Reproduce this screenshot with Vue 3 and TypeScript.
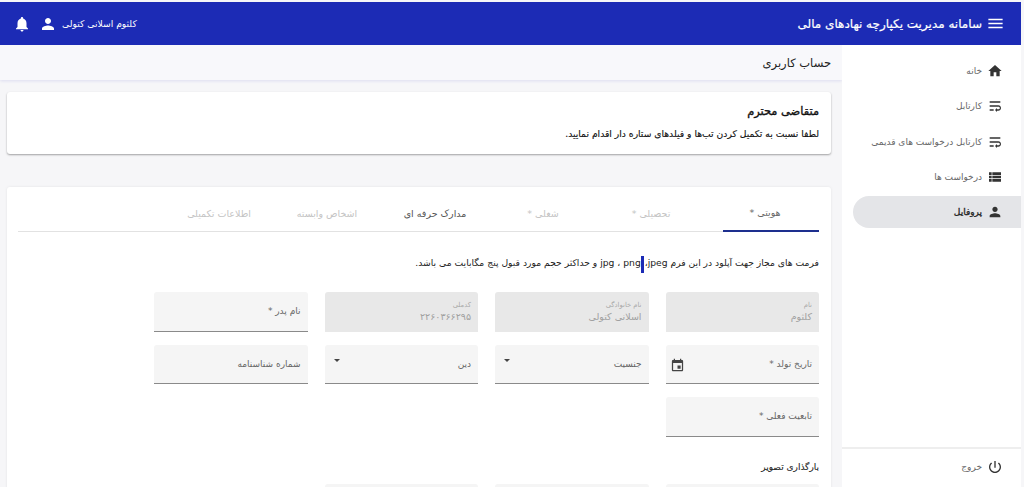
<script setup lang="ts">
const nav = [
  { label: 'خانه', icon: 'home' },
  { label: 'کارتابل', icon: 'wrap' },
  { label: 'کارتابل درخواست های قدیمی', icon: 'wrap' },
  { label: 'درخواست ها', icon: 'list' },
  { label: 'پروفایل', icon: 'person', active: true },
]
const tabs = [
  { label: 'هویتی *', state: 'active' },
  { label: 'تحصیلی *', state: 'off' },
  { label: 'شغلی *', state: 'off' },
  { label: 'مدارک حرفه ای', state: 'on' },
  { label: 'اشخاص وابسته', state: 'off' },
  { label: 'اطلاعات تکمیلی', state: 'off' },
]
const icons: Record<string, string> = {
  home: 'M10 20v-6h4v6h5v-8h3L12 3 2 12h3v8z',
  wrap: 'M4 19h6v-2H4v2zM20 5H4v2h16V5zm-3 6H4v2h13.25c1.1 0 2 .9 2 2s-.9 2-2 2H15v-2l-3 3 3 3v-2h2c2.21 0 4-1.79 4-4s-1.79-4-4-4z',
  list: 'M3 14h4v-4H3v4zm0 5h4v-4H3v4zM3 9h4V5H3v4zm5 5h13v-4H8v4zm0 5h13v-4H8v4zM8 5v4h13V5H8z',
  person: 'M12 12c2.21 0 4-1.79 4-4s-1.79-4-4-4-4 1.79-4 4 1.79 4 4 4zm0 2c-2.67 0-8 1.34-8 4v2h16v-2c0-2.66-5.33-4-8-4z',
}
</script>

<template>
  <div class="page">
    <header class="topbar">
      <div class="brand">
        <svg class="ic menu" viewBox="0 0 24 24"><path d="M3 18h18v-2H3v2zm0-5h18v-2H3v2zm0-7v2h18V6H3z" /></svg>
        <span>سامانه مدیریت یکپارچه نهادهای مالی</span>
      </div>
      <div class="user">
        <span class="user-name">کلثوم اسلانی کتولی</span>
        <svg class="ic user-ic" viewBox="0 0 24 24"><path :d="icons.person" /></svg>
        <svg class="ic bell" viewBox="0 0 24 24"><path d="M12 22c1.1 0 2-.9 2-2h-4c0 1.1.9 2 2 2zm6-6v-5c0-3.07-1.63-5.64-4.5-6.32V4c0-.83-.67-1.5-1.5-1.5s-1.5.67-1.5 1.5v.68C7.64 5.36 6 7.92 6 11v5l-2 2v1h16v-1l-2-2z" /></svg>
      </div>
    </header>

    <div class="body">
      <aside class="side">
        <nav class="nav">
          <a v-for="item in nav" :key="item.label" class="nav-item" :class="{ active: item.active }">
            <svg class="ic nav-ic" viewBox="0 0 24 24"><path :d="icons[item.icon]" /></svg>
            <span>{{ item.label }}</span>
          </a>
        </nav>
        <a class="logout">
          <svg class="ic nav-ic" viewBox="0 0 24 24"><path d="M13 3h-2v10h2V3zm4.83 2.17l-1.42 1.42C17.99 7.86 19 9.81 19 12c0 3.87-3.13 7-7 7s-7-3.13-7-7c0-2.19 1.01-4.14 2.58-5.42L6.17 5.17C4.23 6.82 3 9.26 3 12c0 4.97 4.03 9 9 9s9-4.03 9-9c0-2.74-1.23-5.18-3.17-6.83z" /></svg>
          <span>خروج</span>
        </a>
      </aside>

      <main class="main">
        <div class="titlebar">حساب کاربری</div>
        <section class="card notice">
          <h2>متقاضی محترم</h2>
          <p>لطفا نسبت به تکمیل کردن تب‌ها و فیلدهای ستاره دار اقدام نمایید.</p>
        </section>
        <section class="card form">
          <div class="tabs">
            <div v-for="t in tabs" :key="t.label" class="tab" :class="t.state">{{ t.label }}</div>
          </div>
          <p class="hint">فرمت های مجاز جهت آپلود در این فرم <bdi>jpeg</bdi>‏،‏<span class="sel"></span><bdi>png</bdi> ‏،‏ <bdi>jpg</bdi> و حداکثر حجم مورد قبول پنج مگابایت می باشد.</p>
          <div class="grid">
            <div class="field ro"><small>نام</small><b>کلثوم</b></div>
            <div class="field ro"><small>نام خانوادگی</small><b>اسلانی کتولی</b></div>
            <div class="field ro"><small>کدملی</small><b>۲۲۶۰۳۶۶۲۹۵</b></div>
            <div class="field"><span>نام پدر *</span></div>
            <div class="field">
              <span>تاریخ تولد *</span>
              <svg class="ic cal" viewBox="0 0 24 24"><path d="M17 12h-5v5h5v-5zM16 1v2H8V1H6v2H5c-1.11 0-1.99.9-1.99 2L3 19c0 1.1.89 2 2 2h14c1.1 0 2-.9 2-2V5c0-1.1-.9-2-2-2h-1V1h-2zm3 18H5V8h14v11z" /></svg>
            </div>
            <div class="field"><span>جنسیت</span><i class="caret"></i></div>
            <div class="field"><span>دین</span><i class="caret"></i></div>
            <div class="field"><span>شماره شناسنامه</span></div>
            <div class="field"><span>تابعیت فعلی *</span></div>
          </div>
          <h3 class="upload">بارگذاری تصویر</h3>
          <div class="grid">
            <div class="field"></div>
            <div class="field"></div>
            <div class="field"></div>
          </div>
        </section>
      </main>
    </div>
  </div>
</template>

<style>
html, body { margin: 0; height: 100%; overflow: hidden; background: #fff; }
</style>

<style scoped>
.page {
  width: 1024px; height: 487px; overflow: hidden; box-sizing: border-box;
  padding: 2px 3px 0 0; background: #f6f6f8;
  font-family: "DejaVu Sans", "Noto Sans", sans-serif; direction: rtl; color: #222;
}
.ic { fill: currentColor; display: block; flex: none; }
.topbar {
  height: 43px; background: #1c2bb5; color: #fff;
  display: flex; align-items: center; justify-content: space-between; padding: 0 16px 0 13px;
}
.brand { display: flex; align-items: center; gap: 4px; font-size: 12px; -webkit-text-stroke: .2px #fff; }
.menu { width: 19px; height: 19px; }
.user { display: flex; align-items: center; font-size: 9.2px; }
.user-ic { width: 18px; height: 18px; margin-right: 5px; }
.bell { width: 18px; height: 18px; margin-right: 8px; }
.body { display: flex; height: 442px; }
.side {
  width: 179px; flex: none; background: #fff; display: flex; flex-direction: column;
  justify-content: space-between; box-sizing: border-box;
}
.nav { padding-top: 8px; }
.nav-item {
  height: 35.5px; display: flex; align-items: center; gap: 5px; padding-right: 18px;
  font-size: 9px; color: #666;
}
.nav-item.active {
  margin-left: 11px; height: 32px; margin-top: 1px; background: #e4e5e8;
  border-radius: 16px 0 0 16px; color: #222; -webkit-text-stroke: .3px #222;
}
.nav-ic { width: 16px; height: 16px; color: #333; -webkit-text-stroke: 0; }
.logout {
  height: 40px; border-top: 2px solid #eeeeee; display: flex; align-items: center; gap: 5px;
  padding: 0 18px 2px 0; box-sizing: border-box; font-size: 9px; color: #666;
}
.main { flex: 1; min-width: 0; overflow: hidden; padding: 0 11px 0 7px; }
.titlebar {
  height: 35px; margin: 0 -11px 12px -7px; padding-right: 11px; background: #f8f8fb;
  box-shadow: 0 1px 3px #dcdcf0; display: flex; align-items: center; font-size: 11.5px; color: #222;
}
.card { background: #fff; border-radius: 3px; box-shadow: 0 1px 2px rgba(0,0,0,.35); }
.notice { height: 62px; box-sizing: border-box; padding: 12px 12px 0; margin-bottom: 33px; }
.notice h2 { margin: 0 0 10px; font-size: 11.4px; font-weight: 400; color: #111; -webkit-text-stroke: .35px #111; }
.notice p { margin: 0; font-size: 9.2px; color: #111; -webkit-text-stroke: .15px #111; }
.form { padding: 10px 12px 0 11px; box-shadow: 0 0 3px rgba(0,0,0,.08); height: 320px; box-sizing: border-box; }
.tabs { display: flex; height: 34px; border-bottom: 1px solid #e2e2e2; }
.tab {
  width: 108px; height: 34px; display: flex; align-items: center; justify-content: center;
  padding-bottom: 2px; font-size: 9.5px; box-sizing: border-box; flex: none;
}
.tab.active {
  width: 96px; margin-left: 18px; color: #666; border-bottom: 2px solid #1d2f8e; height: 35px;
  padding: 0 12px 2px 0;
}
.tab.off { color: #c4c4c4; }
.tab.on { color: #555; }
.hint { margin: 24px 0 0; font-size: 9.2px; color: #222; line-height: 13px; }
.sel {
  display: inline-block; width: 3px; height: 17px; margin: -10px 1px -7px 0;
  background: #1c2bb5; vertical-align: baseline;
}
.grid {
  display: grid; grid-template-columns: repeat(4, 153.5px); column-gap: 17px; row-gap: 13px;
  margin-top: 23px;
}
.field {
  height: 39.5px; box-sizing: border-box; background: #f5f5f5; border-bottom: 1px solid #8a8a8a;
  border-radius: 3px 3px 0 0; display: flex; align-items: center; justify-content: space-between;
  padding: 0 7px; font-size: 9px; color: #666; position: relative;
}
.field.ro {
  background: #e8e8e8; border-bottom: 0; flex-direction: column; align-items: flex-start;
  justify-content: center; gap: 2px;
}
.field.ro small { font-size: 6.8px; color: #a8a8a8; }
.field.ro b { font-weight: 400; font-size: 9.5px; color: #a0a0a0; }
.caret {
  border-left: 3px solid transparent; border-right: 3px solid transparent; border-top: 3px solid #444;
  position: absolute; left: 9px; top: 14px;
}
.cal { width: 15px; height: 15px; color: #444; margin: 3px 0 0 -3px; }
.upload { margin: 25.5px 0 -11px; font-size: 9px; font-weight: 400; color: #222; -webkit-text-stroke: .1px #222; }
</style>
